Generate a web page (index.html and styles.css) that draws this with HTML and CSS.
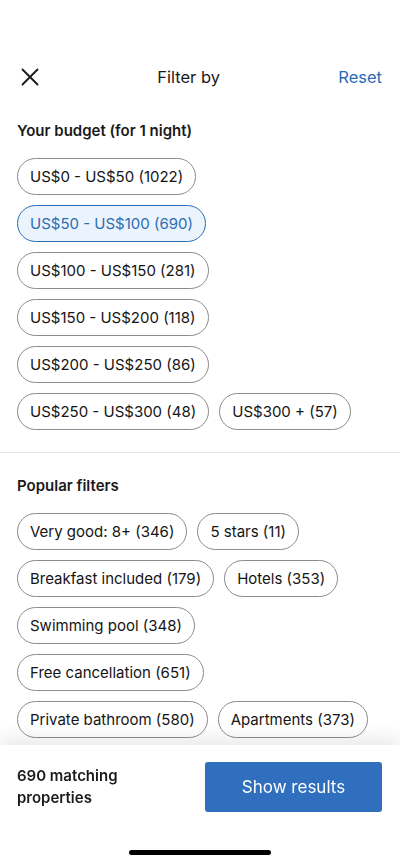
FILE: index.html
```html
<!DOCTYPE html>
<html lang="en">
<head>
<meta charset="utf-8">
<link rel="stylesheet" href="styles.css">
</head>
<body>
<div class="page">
  <header class="topbar">
    <button class="close" aria-label="Close">
      <svg width="18" height="18" viewBox="0 0 18 18"><path d="M1.5 1.5 L16.5 16.5 M16.5 1.5 L1.5 16.5" stroke="#1a1a1a" stroke-width="1.9" stroke-linecap="round"/></svg>
    </button>
    <div class="title">Filter by</div>
    <button class="reset">Reset</button>
  </header>

  <section class="group">
    <h2 class="group-title">Your budget (for 1 night)</h2>
    <div class="chips">
      <span class="chip">US$0 - US$50 (1022)</span>
      <span class="chip chip-selected">US$50 - US$100 (690)</span>
      <span class="chip">US$100 - US$150 (281)</span>
      <span class="chip">US$150 - US$200 (118)</span>
      <span class="chip">US$200 - US$250 (86)</span>
      <span class="chip">US$250 - US$300 (48)</span>
      <span class="chip">US$300 + (57)</span>
    </div>
  </section>

  <hr class="divider">

  <section class="group">
    <h2 class="group-title">Popular filters</h2>
    <div class="chips">
      <span class="chip">Very good: 8+ (346)</span>
      <span class="chip">5 stars (11)</span>
      <span class="chip">Breakfast included (179)</span>
      <span class="chip">Hotels (353)</span>
      <span class="chip">Swimming pool (348)</span>
      <span class="chip">Free cancellation (651)</span>
      <span class="chip">Private bathroom (580)</span>
      <span class="chip">Apartments (373)</span>
    </div>
  </section>
</div>

<footer class="footer">
  <div class="footer-row">
    <div class="count">690 matching<br>properties</div>
    <button class="show">Show results</button>
  </div>
  <div class="home-indicator"></div>
</footer>
</body>
</html>
```

FILE: styles.css
```css
* { box-sizing: border-box; }
html, body { margin: 0; padding: 0; background: #fff; }
body {
  font-family: Inter, "Liberation Sans", Arial, sans-serif;
  color: #1a1a1a;
  width: 400px;
  height: 866px;
  overflow: hidden;
}
.page { padding-top: 56px; }
.topbar {
  height: 42px;
  display: flex;
  align-items: center;
  padding: 0 18px 0 21px;
}
.close {
  border: 0; background: none; padding: 0; margin: 0;
  width: 18px; height: 18px; display: flex; flex: none;
}
.title {
  flex: 1;
  text-align: center;
  font-size: 16.5px;
}
.reset {
  border: 0; background: none; padding: 0;
  font: inherit; font-size: 16.5px; color: #2a6cb6;
}
.group { padding: 0 17px; }
.group-title {
  margin: 23px 0 17px;
  font-size: 15px;
  line-height: 20px;
  font-weight: 600;
}
.chips {
  display: flex;
  flex-wrap: wrap;
  gap: 10px;
}
.chip {
  height: 37px;
  display: inline-flex;
  align-items: center;
  padding: 0 12px;
  border: 1px solid #8c8c8c;
  border-radius: 19px;
  font-size: 15px;
  color: #151515;
  white-space: nowrap;
}
.chip-selected {
  background: #ebf3fd;
  border-color: #2b6db3;
  color: #2b6db3;
}
.divider {
  border: 0;
  border-top: 1px solid #e6e6e6;
  margin: 22px 0 0;
}
.footer {
  position: fixed;
  left: 0; right: 0; bottom: 0;
  height: 121px;
  background: #fff;
  box-shadow: 0 -8px 16px rgba(0,0,0,0.08);
}
.footer-row {
  display: flex;
  justify-content: space-between;
  align-items: center;
  padding: 17px 18px 0 17px;
}
.count {
  font-size: 15px;
  font-weight: 600;
  line-height: 22px;
}
.show {
  width: 177px;
  height: 50px;
  border: 0;
  border-radius: 3px;
  background: #2f6fbe;
  color: #fff;
  font: inherit;
  font-size: 17px;
}
.home-indicator {
  width: 142px;
  height: 5px;
  border-radius: 3px;
  background: #000;
  margin: 38px auto 0;
}
```
